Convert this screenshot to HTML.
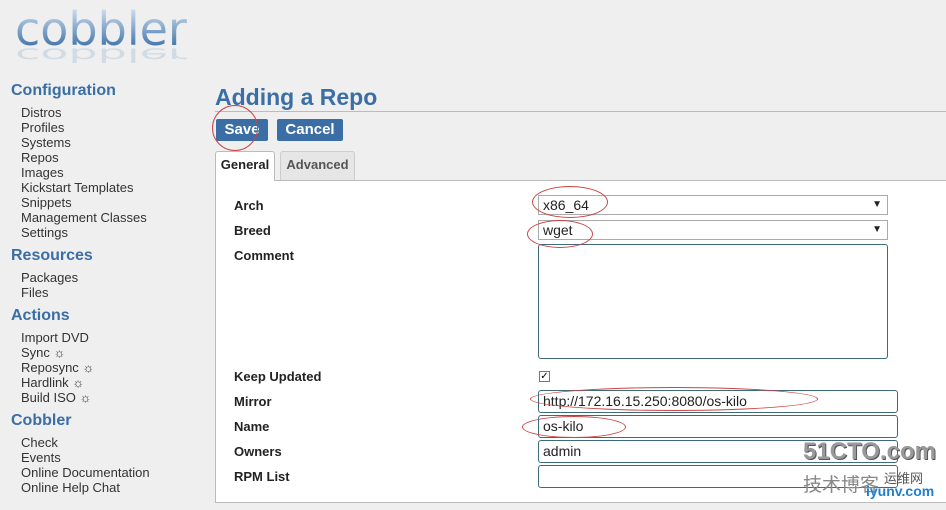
<!DOCTYPE html>
<html><head><style>
body{margin:0;width:946px;height:510px;background:#efefef;font-family:"Liberation Sans",Arial,sans-serif;position:relative;overflow:hidden}
.a{position:absolute}
.h{color:#3a6ea5;font-weight:bold;font-size:16px;left:11px}
.i{left:21px;font-size:13px;color:#333;line-height:15px}
.btn{background:#3a6ea5;color:#fff;font-weight:bold;font-size:15px;border-radius:2px;height:22px;line-height:22px;text-align:center}
.lbl{left:234px;font-weight:bold;font-size:13px;color:#222}
.inp{left:538px;background:#fff;border:1px solid #3d6b7a;border-radius:3px;box-sizing:border-box;font-size:14px;padding-left:4px;color:#222}
.sel{border:1px solid #aaa;border-radius:0}
.oval{border:1px solid #c44;border-radius:50%;box-sizing:border-box}
.logo{font-size:46px;font-family:'DejaVu Sans',sans-serif;line-height:46px}
</style></head><body>
<div class="a logo" style="left:15px;top:6px;color:#4f80b5;background:linear-gradient(#d8e5f2,#2f67a3);-webkit-background-clip:text;background-clip:text;-webkit-text-fill-color:transparent;transform:scaleX(1);transform-origin:left top">cobbler</div>
<div class="a logo" style="left:15px;top:64px;color:#b4c8df;opacity:.5;transform:scale(1,-0.4);transform-origin:left top">cobbler</div>
<div class="a h" style="top:82px">Configuration</div>
<div class="a i" style="top:105px">Distros<br>Profiles<br>Systems<br>Repos<br>Images<br>Kickstart Templates<br>Snippets<br>Management Classes<br>Settings</div>
<div class="a h" style="top:247px">Resources</div>
<div class="a i" style="top:270px">Packages<br>Files</div>
<div class="a h" style="top:307px">Actions</div>
<div class="a i" style="top:330px">Import DVD<br>Sync ☼<br>Reposync ☼<br>Hardlink ☼<br>Build ISO ☼</div>
<div class="a h" style="top:412px">Cobbler</div>
<div class="a i" style="top:435px">Check<br>Events<br>Online Documentation<br>Online Help Chat</div>
<div class="a" style="left:215px;top:84px;font-size:23px;font-weight:bold;color:#3a6ea5">Adding a Repo</div>
<div class="a" style="left:215px;top:111px;width:731px;height:1px;background:#bbb"></div>
<div class="a btn" style="left:216px;top:119px;width:52px">Save</div>
<div class="a btn" style="left:277px;top:119px;width:66px">Cancel</div>
<div class="a oval" style="left:212px;top:105px;width:46px;height:46px"></div>
<div class="a" style="left:215px;top:180px;width:731px;height:323px;background:#fff;border:1px solid #bbb;border-right:none;box-sizing:border-box"></div>
<div class="a" style="left:215px;top:151px;width:60px;height:30px;background:#fff;border:1px solid #bbb;border-bottom:none;border-radius:3px 3px 0 0;box-sizing:border-box;font-size:13px;font-weight:bold;line-height:26px;text-align:center;color:#222">General</div>
<div class="a" style="left:280px;top:151px;width:75px;height:29px;background:#e6e6e6;border:1px solid #ccc;border-bottom:none;border-radius:3px 3px 0 0;box-sizing:border-box;font-size:13px;font-weight:bold;line-height:26px;text-align:center;color:#555">Advanced</div>
<div class="a lbl" style="top:198px">Arch</div>
<div class="a lbl" style="top:223px">Breed</div>
<div class="a lbl" style="top:248px">Comment</div>
<div class="a lbl" style="top:369px">Keep Updated</div>
<div class="a lbl" style="top:394px">Mirror</div>
<div class="a lbl" style="top:419px">Name</div>
<div class="a lbl" style="top:444px">Owners</div>
<div class="a lbl" style="top:469px">RPM List</div>
<div class="a inp sel" style="top:195px;width:350px;height:20px;line-height:18px">x86_64<span style="position:absolute;right:5px;font-size:10px">▼</span></div>
<div class="a inp sel" style="top:220px;width:350px;height:20px;line-height:18px">wget<span style="position:absolute;right:5px;font-size:10px">▼</span></div>
<div class="a inp" style="top:244px;width:350px;height:115px"></div>
<div class="a" style="left:539px;top:371px;width:11px;height:11px;border:1px solid #777;box-sizing:border-box;font-size:10px;line-height:9px;text-align:center;background:#fff">✓</div>
<div class="a inp" style="top:390px;width:360px;height:23px;line-height:21px">http://172.16.15.250:8080/os-kilo</div>
<div class="a inp" style="top:415px;width:360px;height:23px;line-height:21px">os-kilo</div>
<div class="a inp" style="top:440px;width:360px;height:23px;line-height:21px">admin</div>
<div class="a inp" style="top:465px;width:360px;height:23px"></div>
<div class="a oval" style="left:532px;top:186px;width:76px;height:32px"></div>
<div class="a oval" style="left:527px;top:220px;width:66px;height:28px"></div>
<div class="a oval" style="left:530px;top:387px;width:288px;height:24px"></div>
<div class="a oval" style="left:522px;top:416px;width:104px;height:22px"></div>
<div class="a" style="left:803px;top:438px;font-size:24px;font-weight:bold;color:#999;text-shadow:1px 1px #555">51CTO.com</div>
<div class="a" style="left:803px;top:470px;font-size:19px;color:#888;font-family:'Liberation Sans','Noto Sans CJK SC',sans-serif">技术博客</div>
<div class="a" style="left:884px;top:468px;font-size:13px;color:#555;font-family:'Liberation Sans','Noto Sans CJK SC',sans-serif">运维网</div>
<div class="a" style="left:866px;top:483px;font-size:14px;font-weight:bold;color:#1e7fd0">iyunv.com</div>
</body></html>
